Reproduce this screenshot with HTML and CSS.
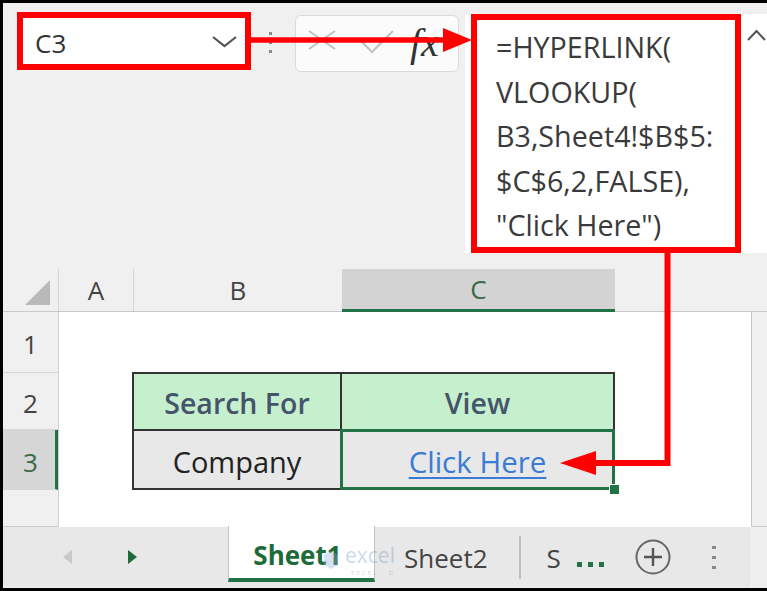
FILE: index.html
```html
<!DOCTYPE html>
<html>
<head>
<meta charset="utf-8">
<link rel="stylesheet" href="styles.css">
</head>
<body>
<div class="screen">
  <div class="topbar">
    <div class="namebox">
      <span class="ref">C3</span>
      <svg class="nb-chev" width="25" height="13" viewBox="0 0 25 13"><polyline points="1,2 12.5,11 24,2" fill="none" stroke="#555" stroke-width="2.2"/></svg>
    </div>
    <div class="vdots"><i></i><i></i><i></i></div>
    <div class="fxbtns">
      <svg class="ic-x" width="30" height="20" viewBox="0 0 30 20"><path d="M2 1 L28 19 M28 1 L2 19" stroke="#c2c2c2" stroke-width="2" fill="none"/></svg>
      <svg class="ic-check" width="34" height="24" viewBox="0 0 34 24"><polyline points="1,11 12,22 33,1" fill="none" stroke="#c2c2c2" stroke-width="2"/></svg>
      <span class="fx">fx</span>
    </div>
    <div class="fbar">
      <div class="formula">=HYPERLINK(<br>VLOOKUP(<br>B3,Sheet4!$B$5:<br>$C$6,2,FALSE),<br>"Click Here")</div>
      <svg class="caret" width="19" height="12" viewBox="0 0 19 12"><polyline points="1,11 9.5,2 18,11" fill="none" stroke="#555" stroke-width="2"/></svg>
    </div>
  </div>

  <div class="colhdrs">
    <div class="corner"><svg width="25" height="25" viewBox="0 0 25 25"><polygon points="25,0 25,25 0,25" fill="#b9b9b9"/></svg></div>
    <div class="ch ch-a">A</div>
    <div class="ch ch-b">B</div>
    <div class="ch ch-c">C</div>
    <div class="ch-rest"></div>
  </div>

  <div class="sheetbody">
    <div class="rowhdrs">
      <div class="rh rh-1">1</div>
      <div class="rh rh-2">2</div>
      <div class="rh rh-3">3</div>
      <div class="rh rh-4"></div>
    </div>
    <div class="cells">
      <div class="tbl">
        <div class="td td-head">Search For</div>
        <div class="td td-head">View</div>
        <div class="td td-grey">Company</div>
        <div class="td td-grey td-active"><span class="link">Click Here</span><span class="handle"></span></div>
      </div>
    </div>
    <div class="vstrip"></div>
  </div>

  <div class="tabbar">
    <div class="nav">
      <svg class="nav-l" width="10" height="14" viewBox="0 0 10 14"><polygon points="10,0 10,14 1,7" fill="#c9c9c9"/></svg>
      <svg class="nav-r" width="10" height="14" viewBox="0 0 10 14"><polygon points="0,0 0,14 9,7" fill="#1d6b3a"/></svg>
    </div>
    <div class="tab tab-active">Sheet1</div>
    <div class="tab tab-2">Sheet2</div>
    <div class="tabsep"></div>
    <div class="tab tab-3">S</div>
    <div class="gdots"><i></i><i></i><i></i></div>
    <svg class="plus" width="36" height="36" viewBox="0 0 36 36"><circle cx="18" cy="18" r="16.5" fill="none" stroke="#666" stroke-width="2"/><path d="M18 9 V27 M9 18 H27" stroke="#555" stroke-width="2.4"/></svg>
    <div class="tdots"><i></i><i></i><i></i></div>
    <div class="tstrip"></div>
  </div>

  <div class="wm">
    <svg width="16" height="20" viewBox="0 0 16 20"><polygon points="8,1 15,5 15,15 8,19 1,15 1,5" fill="#8fb0dc"/></svg>
    <div class="wm-text"><div class="wm-name">excel</div><div class="wm-sub">EXCEL · D</div></div>
  </div>

  <svg class="annot" width="767" height="591" viewBox="0 0 767 591">
    <line x1="249" y1="40" x2="448" y2="40" stroke="#ff0000" stroke-width="5.5"/>
    <polygon points="443,28 472,40 443,52" fill="#ff0000"/>
    <polyline points="667.5,251 667.5,463 590,463" fill="none" stroke="#ff0000" stroke-width="6"/>
    <polygon points="596,451 560,463 596,475" fill="#ff0000"/>
  </svg>
</div>
</body>
</html>
```

FILE: styles.css
```css
* { box-sizing: border-box; }
html, body { margin: 0; padding: 0; background: #ffffff; }
body { font-family: "Open Sans", "Noto Sans", sans-serif; }

.screen {
  position: relative;
  width: 767px;
  height: 591px;
  border-top: 3px solid #000;
  border-left: 3px solid #000;
  border-bottom: 3px solid #000;
  background: #f0f0f0;
  overflow: hidden;
}

/* ---------- formula bar ---------- */
.topbar {
  display: flex;
  align-items: flex-start;
  height: 266px;
  padding: 9px 0 0 14px;
}
.namebox {
  display: flex;
  align-items: center;
  width: 234px;
  height: 58px;
  border: 6px solid #ff0000;
  background: #fff;
  padding: 4px 8px 0 12px;
}
.ref { font-size: 26px; color: #333; line-height: 1; }
.nb-chev { margin-left: auto; margin-top: -4px; }

.vdots {
  display: flex;
  flex-direction: column;
  gap: 6px;
  margin: 20px 0 0 18px;
}
.vdots i, .tdots i { display: block; width: 3px; height: 3px; background: #8a8a8a; }

.fxbtns {
  display: flex;
  align-items: flex-start;
  width: 164px;
  height: 57px;
  margin: 3px 0 0 23px;
  border: 1px solid #dadada;
  border-radius: 6px;
  background: #fbfbfb;
  padding: 14px 0 0 11px;
}
.ic-check { margin-left: 23px; }
.fx {
  margin: -7px 0 0 16px;
  font-family: "Liberation Serif", serif;
  font-style: italic;
  font-size: 40px;
  color: #333;
  line-height: 1;
}

.fbar {
  display: flex;
  align-items: flex-start;
  flex: 1;
  height: 239px;
  margin: 2px 0 0 6px;
  background: #fff;
  padding-left: 6px;
}
.formula {
  width: 270px;
  height: 239px;
  border: 6px solid #ff0000;
  padding: 5px 0 0 19px;
  font-size: 28.7px;
  line-height: 44.5px;
  color: #3a3a3a;
  white-space: nowrap;
}
.caret { margin: 15px 0 0 6px; }

/* ---------- column headers ---------- */
.colhdrs {
  display: flex;
  height: 43px;
  border-bottom: 1px solid #c9c9c9;
}
.corner {
  width: 56px;
  border-right: 1px solid #d6d6d6;
  padding: 11px 0 0 22px;
}
.ch {
  display: flex;
  align-items: center;
  justify-content: center;
  font-size: 26px;
  color: #444;
}
.ch-a { width: 75px; border-right: 1px solid #d6d6d6; }
.ch-b { width: 208px; }
.ch-c {
  width: 273px;
  background: #d3d3d3;
  border-bottom: 3px solid #217346;
  color: #3a6a4a;
  margin-bottom: -1px;
}
.ch-rest { flex: 1; }

/* ---------- grid body ---------- */
.sheetbody {
  display: flex;
  height: 215px;
}
.rowhdrs {
  display: flex;
  flex-direction: column;
  width: 56px;
  border-right: 1px solid #d0d0d0;
}
.rh {
  display: flex;
  align-items: center;
  justify-content: center;
  font-size: 26px;
  color: #444;
  border-bottom: 1px solid #d6d6d6;
  padding-top: 4px;
}
.rh-1 { height: 61px; }
.rh-2 { height: 57px; }
.rh-3 {
  height: 60px;
  background: #d6d6d6;
  border-right: 3px solid #217346;
  color: #3a6a4a;
  padding-left: 3px;
}
.rh-4 { flex: 1; border-bottom: none; }

.cells {
  width: 693px;
  background: #fff;
  border-right: 1px solid #c6c6c6;
  padding: 60px 0 0 73px;
}
.vstrip { flex: 1; }

.tbl {
  display: grid;
  grid-template-columns: 206px 271px;
  grid-template-rows: 55px 57px;
  gap: 2px;
  padding: 2px;
  width: 483px;
  background: #333;
}
.td {
  display: flex;
  align-items: center;
  justify-content: center;
  font-size: 29px;
  position: relative;
  padding-top: 3px;
}
.td-head { background: #c6efce; color: #44546a; font-weight: 600; font-size: 28.5px; }
.td-grey { background: #e8e8e8; color: #222; }
.td-active::after {
  content: "";
  position: absolute;
  inset: -2px;
  border: 3px solid #217346;
}
.link {
  color: #3a7bd5;
  text-decoration: underline;
  text-decoration-thickness: 2px;
  text-underline-offset: 4px;
  font-size: 29.5px;
}
.handle {
  position: absolute;
  right: -6px;
  bottom: -6px;
  width: 9px;
  height: 9px;
  background: #217346;
  outline: 1px solid #fff;
  z-index: 2;
}

/* ---------- sheet tabs ---------- */
.tabbar {
  display: flex;
  align-items: center;
  height: 61px;
  background: #e8e8e8;
  border-top: 1px solid #cbcbcb;
  margin-top: -1px;
}
.nav {
  display: flex;
  align-items: center;
  width: 225px;
  height: 100%;
}
.nav-l { margin-left: 59px; }
.nav-r { margin-left: 56px; }
.tab { font-size: 26px; color: #444; white-space: nowrap; padding-top: 2px; }
.tab-active {
  align-self: flex-start;
  display: flex;
  align-items: center;
  justify-content: center;
  width: 147px;
  height: 56px;
  margin-top: -1px;
  background: #fff;
  border-left: 1px solid #c4c4c4;
  border-right: 1px solid #c4c4c4;
  border-bottom: 4px solid #217346;
  color: #1e6b3a;
  font-weight: 700;
  padding: 5px 8px 0 0;
}
.tab-2 { margin-left: 29px; position: relative; z-index: 2; }
.tabsep { width: 2px; height: 43px; background: #bdbdbd; margin-left: 31px; }
.tab-3 { margin-left: 26px; }
.gdots { display: flex; gap: 6px; margin: 14px 0 0 16px; }
.gdots i { display: block; width: 5px; height: 5px; background: #217346; }
.plus { margin-left: 31px; }
.tdots { display: flex; flex-direction: column; gap: 7px; margin-left: 41px; }
.tdots i { width: 4px; }
.tstrip { margin-left: auto; width: 17px; height: 100%; background: #efefef; }

/* ---------- watermark ---------- */
.wm {
  position: absolute;
  left: 320px;
  top: 540px;
  display: flex;
  align-items: center;
  gap: 2px;
  opacity: 0.35;
  z-index: 1;
}
.wm-text { display: flex; flex-direction: column; gap: 3px; }
.wm-name { font-size: 21px; line-height: 24px; color: #6f93c8; padding-left: 4px; }
.wm-sub { font-size: 6px; line-height: 7px; letter-spacing: 2px; color: #7f8a99; padding-left: 10px; }

/* ---------- annotation arrows ---------- */
.annot {
  position: absolute;
  left: -3px;
  top: -3px;
  pointer-events: none;
  z-index: 5;
}
```
